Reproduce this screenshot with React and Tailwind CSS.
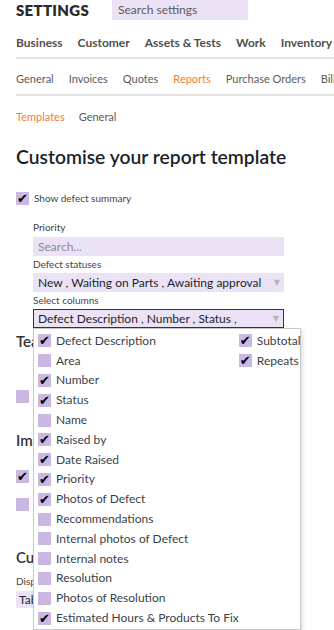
const lavender = 'bg-[#ebe3f5]';

function Check({ checked }) {
  return (
    <span className="w-[13px] h-[13px] bg-[#cbb8e2] flex items-center justify-center shrink-0">
      {checked && (
        <span className="text-[13px] leading-none text-black" style={{ fontFamily: '"DejaVu Sans", sans-serif' }}>
          ✔
        </span>
      )}
    </span>
  );
}

function Caret() {
  return <span className="ml-auto mr-[4px] text-[8px] text-[#b5b5b5]" style={{ fontFamily: '"DejaVu Sans", sans-serif' }}>▼</span>;
}

const leftCols = [
  ['Defect Description', true],
  ['Area', false],
  ['Number', true],
  ['Status', true],
  ['Name', false],
  ['Raised by', true],
  ['Date Raised', true],
  ['Priority', true],
  ['Photos of Defect', true],
  ['Recommendations', false],
  ['Internal photos of Defect', false],
  ['Internal notes', false],
  ['Resolution', false],
  ['Photos of Resolution', false],
  ['Estimated Hours & Products To Fix', true],
];

const rightCols = [
  ['Subtotal', true],
  ['Repeats', true],
];

function Option({ label, checked }) {
  return (
    <div className="h-[19.8px] flex items-center gap-[5px]">
      <Check checked={checked} />
      <span className="text-[12px] text-[#3b3f4a] whitespace-nowrap">{label}</span>
    </div>
  );
}

export default function App() {
  return (
    <div className="w-[334px] h-[630px] overflow-hidden bg-white relative" style={{ fontFamily: 'Lato, "Open Sans", sans-serif' }}>
      {/* header */}
      <div className="flex items-center pl-4 h-5">
        <span className="text-[15px] font-extrabold tracking-[0.3px] text-[#2b2b2b]">SETTINGS</span>
        <div className={`ml-[23px] w-[136px] h-5 ${lavender} flex items-center pl-[6px] text-[12px] text-[#5a5a5a]`}>
          Search settings
        </div>
      </div>

      <div className="ml-4 mt-[14px] border-b-2 border-[#e2e2e2] pb-[5px] flex gap-[15px] text-[12px] font-bold text-[#4f4f4f] whitespace-nowrap leading-[18px]">
        <span>Business</span>
        <span>Customer</span>
        <span>Assets &amp; Tests</span>
        <span>Work</span>
        <span>Inventory</span>
      </div>

      <div className="ml-4 mt-[12px] border-b-2 border-[#e2e2e2] pb-[6px] flex gap-[15px] text-[11px] text-[#5c5c5c] whitespace-nowrap">
        <span>General</span>
        <span>Invoices</span>
        <span>Quotes</span>
        <span className="text-[#f47b3a]">Reports</span>
        <span>Purchase Orders</span>
        <span>Billing</span>
      </div>

      <div className="ml-4 mt-[13px] flex gap-[14px] text-[11px] text-[#5c5c5c]">
        <span className="text-[#f47b3a]">Templates</span>
        <span>General</span>
      </div>

      <div className="px-4">
        <h1 className="mt-[20px] text-[19.3px] font-semibold text-[#1c1f2a] leading-[24px]">Customise your report template</h1>

        <div className="mt-[22px] flex items-center gap-[5px]">
          <Check checked />
          <span className="text-[10px] text-[#444]">Show defect summary</span>
        </div>

        <div className="ml-[17px] w-[251px] mt-[15px]">
          <div className="text-[10px] text-[#444] leading-[12px]">Priority</div>
          <div className={`mt-[4px] h-[19px] ${lavender} flex items-center pl-[5px] text-[12px] text-[#8a8a8a]`}>Search...</div>
          <div className="mt-[2px] text-[10px] text-[#444] leading-[12px]">Defect statuses</div>
          <div className={`mt-[3px] h-[19px] ${lavender} flex items-center pl-[5px] text-[12px] text-[#1c1f2a] whitespace-nowrap`}>
            New , Waiting on Parts , Awaiting approval
            <Caret />
          </div>
          <div className="mt-[2px] text-[10px] text-[#444] leading-[12px]">Select columns</div>
          <div className={`mt-[3px] h-[19px] ${lavender} border border-[#333] flex items-center pl-[4px] text-[12px] text-[#1c1f2a] whitespace-nowrap`}>
            Defect Description , Number , Status ,
            <Caret />
          </div>
        </div>

        {/* content behind the dropdown */}
        <div className="mt-[3px] text-[15px] font-semibold text-[#333] leading-[20px]">Team</div>
        <div className="mt-[39px]"><Check /></div>
        <div className="mt-[27px] text-[15px] font-semibold text-[#333] leading-[20px]">Images</div>
        <div className="mt-[20px]"><Check checked /></div>
        <div className="mt-[15px]"><Check /></div>
        <div className="mt-[36px] text-[15px] font-semibold text-[#333] leading-[20px]">Custom fields</div>
        <div className="mt-[7px] text-[10px] text-[#444] leading-[15px]">Display as</div>
        <div className={`mt-[2px] w-[120px] h-[17px] ${lavender} flex items-center pl-[3px] text-[12px] text-[#1c1f2a]`}>Table</div>
      </div>

      {/* dropdown panel */}
      <div className="absolute left-[33px] top-[328px] w-[268px] h-[302px] bg-white border border-[#c8c8c8] shadow-[2px_2px_4px_rgba(0,0,0,0.12)] flex justify-between pl-[4px] pr-[5px] pt-[2px]">
        <div>
          {leftCols.map(([l, c]) => (
            <Option key={l} label={l} checked={c} />
          ))}
        </div>
        <div>
          {rightCols.map(([l, c]) => (
            <Option key={l} label={l} checked={c} />
          ))}
        </div>
      </div>
    </div>
  );
}
